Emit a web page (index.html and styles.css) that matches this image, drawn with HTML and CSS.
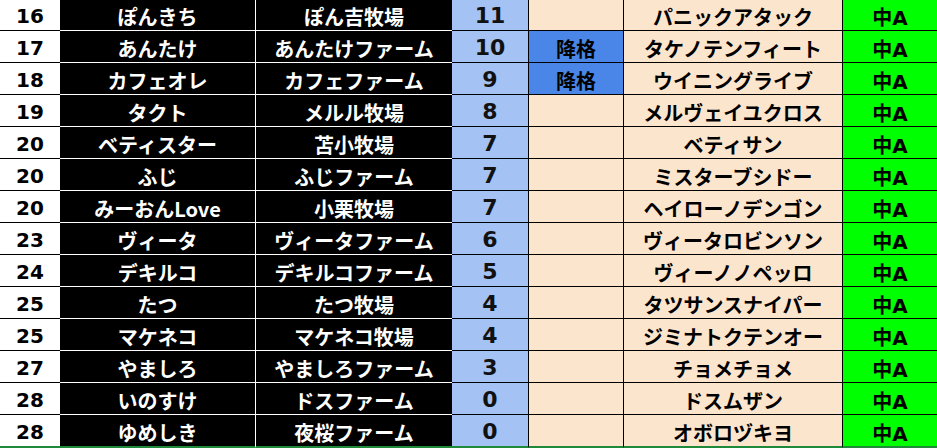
FILE: index.html
```html
<!DOCTYPE html>
<html lang="ja">
<head>
<meta charset="utf-8">
<link rel="stylesheet" href="styles.css">
</head>
<body>
<div class="sheet">
  <div class="row"><div class="c rank">16</div><div class="c name">ぽんきち</div><div class="c farm">ぽん吉牧場</div><div class="c pts">11</div><div class="c note"></div><div class="c horse">パニックアタック</div><div class="c cls">中A</div></div>
  <div class="row"><div class="c rank">17</div><div class="c name">あんたけ</div><div class="c farm">あんたけファーム</div><div class="c pts">10</div><div class="c note down">降格</div><div class="c horse">タケノテンフィート</div><div class="c cls">中A</div></div>
  <div class="row"><div class="c rank">18</div><div class="c name">カフェオレ</div><div class="c farm">カフェファーム</div><div class="c pts">9</div><div class="c note down">降格</div><div class="c horse">ウイニングライブ</div><div class="c cls">中A</div></div>
  <div class="row"><div class="c rank">19</div><div class="c name">タクト</div><div class="c farm">メルル牧場</div><div class="c pts">8</div><div class="c note"></div><div class="c horse">メルヴェイユクロス</div><div class="c cls">中A</div></div>
  <div class="row"><div class="c rank">20</div><div class="c name">ベティスター</div><div class="c farm">苫小牧場</div><div class="c pts">7</div><div class="c note"></div><div class="c horse">ベティサン</div><div class="c cls">中A</div></div>
  <div class="row"><div class="c rank">20</div><div class="c name">ふじ</div><div class="c farm">ふじファーム</div><div class="c pts">7</div><div class="c note"></div><div class="c horse">ミスターブシドー</div><div class="c cls">中A</div></div>
  <div class="row"><div class="c rank">20</div><div class="c name">みーおんLove</div><div class="c farm">小栗牧場</div><div class="c pts">7</div><div class="c note"></div><div class="c horse">ヘイローノデンゴン</div><div class="c cls">中A</div></div>
  <div class="row"><div class="c rank">23</div><div class="c name">ヴィータ</div><div class="c farm">ヴィータファーム</div><div class="c pts">6</div><div class="c note"></div><div class="c horse">ヴィータロビンソン</div><div class="c cls">中A</div></div>
  <div class="row"><div class="c rank">24</div><div class="c name">デキルコ</div><div class="c farm">デキルコファーム</div><div class="c pts">5</div><div class="c note"></div><div class="c horse">ヴィーノノペッロ</div><div class="c cls">中A</div></div>
  <div class="row"><div class="c rank">25</div><div class="c name">たつ</div><div class="c farm">たつ牧場</div><div class="c pts">4</div><div class="c note"></div><div class="c horse">タツサンスナイパー</div><div class="c cls">中A</div></div>
  <div class="row"><div class="c rank">25</div><div class="c name">マケネコ</div><div class="c farm">マケネコ牧場</div><div class="c pts">4</div><div class="c note"></div><div class="c horse">ジミナトクテンオー</div><div class="c cls">中A</div></div>
  <div class="row"><div class="c rank">27</div><div class="c name">やましろ</div><div class="c farm">やましろファーム</div><div class="c pts">3</div><div class="c note"></div><div class="c horse">チョメチョメ</div><div class="c cls">中A</div></div>
  <div class="row"><div class="c rank">28</div><div class="c name">いのすけ</div><div class="c farm">ドスファーム</div><div class="c pts">0</div><div class="c note"></div><div class="c horse">ドスムザン</div><div class="c cls">中A</div></div>
  <div class="row last"><div class="c rank">28</div><div class="c name">ゆめしき</div><div class="c farm">夜桜ファーム</div><div class="c pts">0</div><div class="c note"></div><div class="c horse">オボロヅキヨ</div><div class="c cls">中A</div></div>
</div>
</body>
</html>
```
FILE: styles.css
```css
html, body {
  margin: 0;
  padding: 0;
  background: #ffffff;
  overflow: hidden;
}
.sheet {
  margin-top: -1px;
  width: 937px;
  font-family: "Noto Sans CJK JP", "Noto Sans", sans-serif;
  font-weight: 700;
  font-size: 20px;
}
.row {
  display: grid;
  grid-template-columns: 60px 196px 196px 77px 95px 219px 1fr;
  height: 32px;
}
.c {
  box-sizing: border-box;
  height: 32px;
  border-bottom: 1px solid #000;
  display: flex;
  align-items: center;
  justify-content: center;
  padding-top: 3px;
  white-space: nowrap;
  color: #000;
}
.rank, .pts, .cls {
  font-family: "DejaVu Sans", "Noto Sans CJK JP", sans-serif;
}
.rank { background: #fff; font-size: 20px; }
.pts { font-size: 22px; padding-top: 1px; color: #111; }
.cls { font-size: 20px; }
.name { background: #000; color: #fff; border-bottom-color: #fff; border-right: 1px solid #fff; }
.farm { background: #000; color: #fff; border-bottom-color: #fff; }
.pts { background: #a4c2f4; border-right: 1px solid #000; }
.note { background: #fce5cd; border-right: 1px solid #000; }
.note.down { background: #4a86e8; }
.horse { background: #fce5cd; border-right: 1px solid #000; }
.cls { background: #00ff00; }
.row.last { height: 33px; }
.row.last .c { height: 33px; border-bottom: 2px solid #1f8a3a; }
```
